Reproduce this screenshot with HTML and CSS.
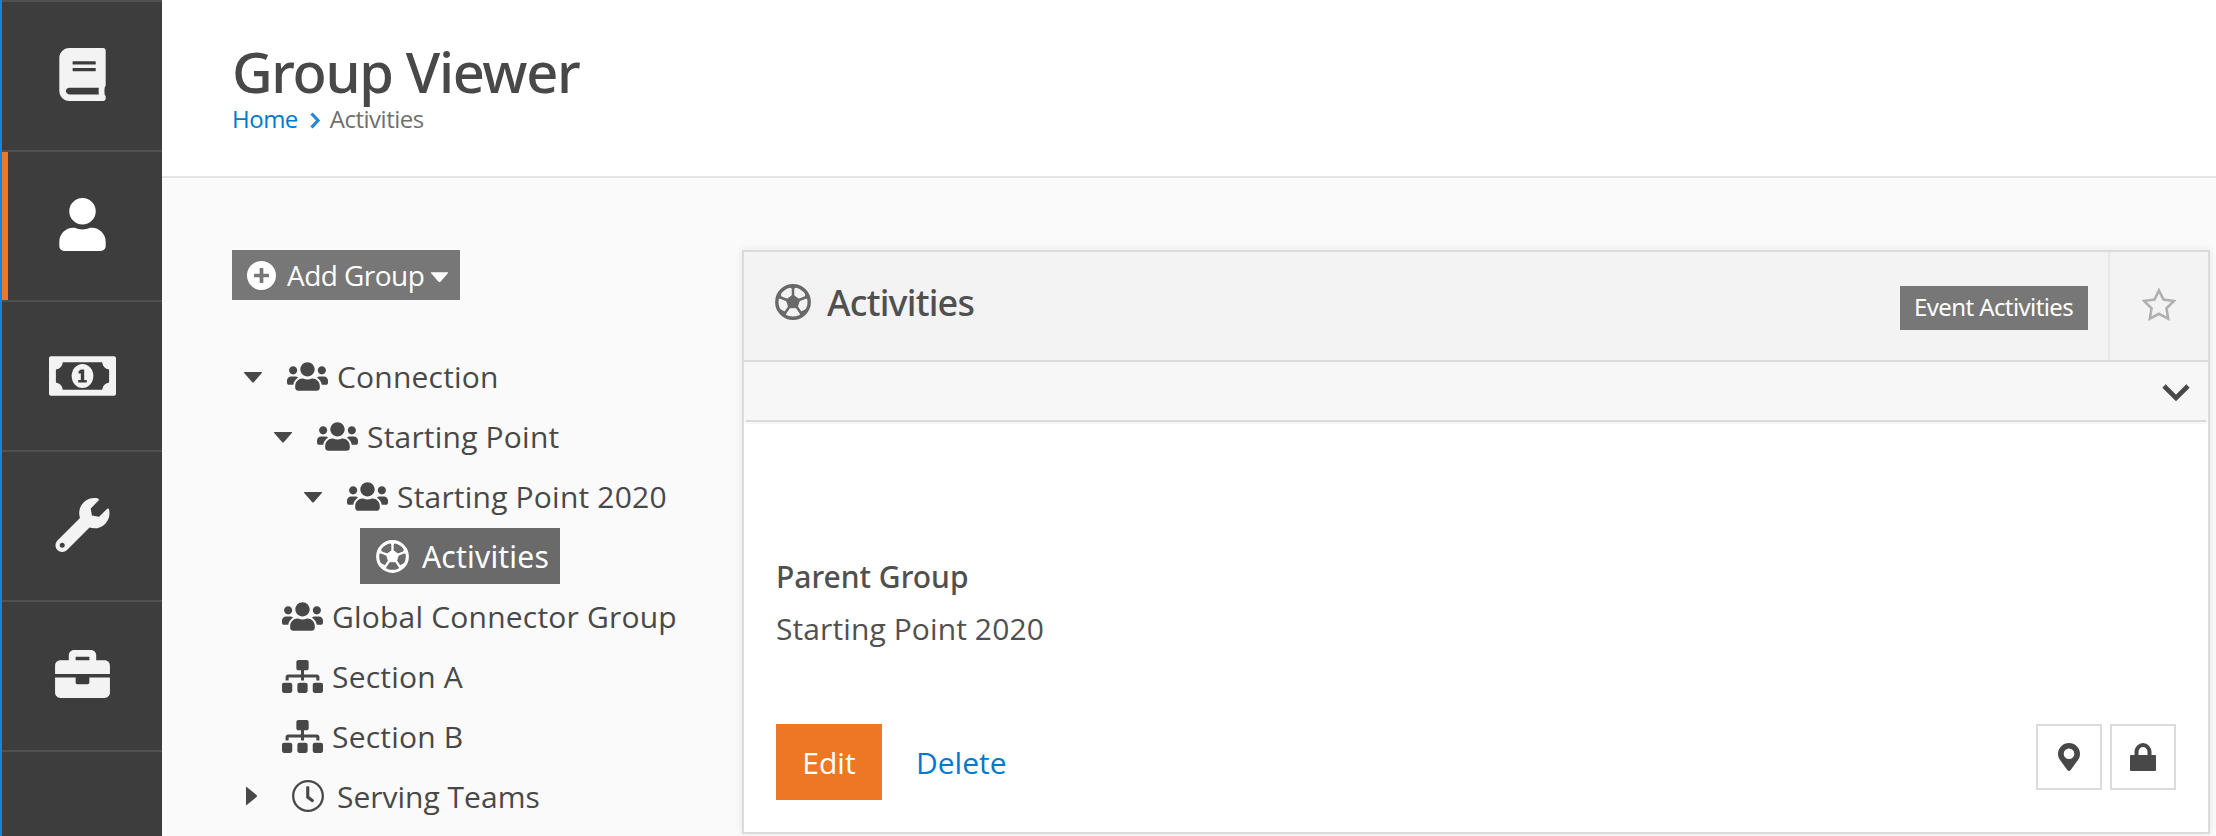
FILE: index.html
```html
<!DOCTYPE html>
<html lang="en">
<head>
<meta charset="utf-8">
<title>Group Viewer</title>
<link rel="stylesheet" href="styles.css">
</head>
<body>
<svg class="defs" width="0" height="0">
  <symbol id="users" viewBox="0 0 640 512"><path d="M96 224c35.3 0 64-28.7 64-64s-28.7-64-64-64-64 28.7-64 64 28.7 64 64 64zm448 0c35.3 0 64-28.7 64-64s-28.7-64-64-64-64 28.7-64 64 28.7 64 64 64zm32 32h-64c-17.6 0-33.5 7.1-45.1 18.6 40.3 22.1 68.9 62 75.1 109.4h66c17.7 0 32-14.3 32-32v-32c0-35.3-28.7-64-64-64zm-256 0c61.9 0 112-50.1 112-112S381.9 32 320 32 208 82.1 208 144s50.1 112 112 112zm76.8 32h-8.3c-20.8 10-43.9 16-68.5 16s-47.6-6-68.5-16h-8.3C179.6 288 128 339.6 128 403.2V432c0 26.5 21.5 48 48 48h288c26.5 0 48-21.5 48-48v-28.8c0-63.6-51.6-115.2-115.2-115.2zm-223.7-13.4C161.5 263.1 145.6 256 128 256H64c-35.3 0-64 28.7-64 64v32c0 17.7 14.3 32 32 32h65.9c6.3-47.4 34.9-87.3 75.2-109.4z"/></symbol>
  <symbol id="sitemap" viewBox="0 0 640 512"><path d="M128 352H32c-17.67 0-32 14.33-32 32v96c0 17.67 14.33 32 32 32h96c17.67 0 32-14.33 32-32v-96c0-17.67-14.33-32-32-32zm-24-80h192v48h48v-48h192v48h48v-57.59c0-21.17-17.23-38.41-38.41-38.41H344v-64h40c17.67 0 32-14.33 32-32V32c0-17.67-14.33-32-32-32H256c-17.67 0-32 14.33-32 32v96c0 17.67 14.33 32 32 32h40v64H94.41C73.23 224 56 241.23 56 262.41V320h48v-48zm264 80h-96c-17.67 0-32 14.33-32 32v96c0 17.67 14.33 32 32 32h96c17.67 0 32-14.33 32-32v-96c0-17.67-14.33-32-32-32zm240 0h-96c-17.67 0-32 14.33-32 32v96c0 17.67 14.33 32 32 32h96c17.67 0 32-14.33 32-32v-96c0-17.67-14.33-32-32-32z"/></symbol>
  <symbol id="caret-down" viewBox="0 0 20 11"><path d="M1.5 0h17q1.2 0 .3 1L11 10q-1 1-2 0L1.200 1q-.9-1 .3-1z"/></symbol>
  <symbol id="caret-right" viewBox="0 0 11 20"><path d="M0 1.500v17q0 1.200 1 .3L10.500 11q1-1 0-2L1 1.200q-1-.9-1 .3z"/></symbol>
  <symbol id="ball" viewBox="0 0 36 36">
    <circle cx="18" cy="18" r="16.200" fill="none" stroke="currentColor" stroke-width="3.400"/>
    <path d="M18 11l6.700 4.800-2.600 7.900h-8.200l-2.600-7.900z" stroke="currentColor" stroke-width="1" stroke-linejoin="round"/>
    <path d="M18 12V3M24 16l9-3.500M21.500 22.500l5 7.500M14.500 22.500l-5 7.500M12 16l-9-3.500" fill="none" stroke="currentColor" stroke-width="2.500"/>
    <path d="M13.500 1.500h9L18 6zM31 7.500l3.500 8.500-5-2.500zM33 24l-8.500 8.500 1.200-4.800zM3 24l8.500 8.500-1.200-4.800zM5 7.500L1.500 16l5-2.500z"/>
  </symbol>
</svg>
<div class="app">
  <nav class="sidebar">
    <a class="nav-item"><svg class="nav-glyph nav-book" viewBox="0 0 448 512"><path d="M448 360V24c0-13.300-10.700-24-24-24H96C43 0 0 43 0 96v320c0 53 43 96 96 96h328c13.300 0 24-10.700 24-24v-16c0-7.500-3.500-14.300-8.900-18.700-4.200-15.400-4.200-59.300 0-74.700 5.400-4.300 8.900-11.100 8.900-18.600zM128 134c0-3.300 2.700-6 6-6h212c3.300 0 6 2.700 6 6v20c0 3.300-2.700 6-6 6H134c-3.300 0-6-2.700-6-6v-20zm0 64c0-3.300 2.700-6 6-6h212c3.300 0 6 2.700 6 6v20c0 3.300-2.700 6-6 6H134c-3.300 0-6-2.700-6-6v-20zm253.400 250H96c-17.700 0-32-14.300-32-32 0-17.600 14.400-32 32-32h285.400c-1.900 17.100-1.900 46.900 0 64z"/></svg></a>
    <a class="nav-item active"><svg class="nav-glyph nav-user" viewBox="0 0 448 512"><path d="M224 256c70.700 0 128-57.300 128-128S294.700 0 224 0 96 57.300 96 128s57.300 128 128 128zm89.600 32h-16.700c-22.200 10.200-46.900 16-72.900 16s-50.600-5.800-72.900-16h-16.700C60.200 288 0 348.200 0 422.400V464c0 26.500 21.500 48 48 48h352c26.500 0 48-21.500 48-48v-41.600c0-74.200-60.200-134.400-134.400-134.400z"/></svg></a>
    <a class="nav-item"><svg class="nav-glyph nav-money" viewBox="0 0 68 40"><path fill-rule="evenodd" d="M2 0h64q2 0 2 2v36q0 2-2 2H2q-2 0-2-2V2q0-2 2-2zM14 6q-.5 6-7 7.500v13q6.500 1.500 7 7.500h40q.5-6 7-7.500v-13q-6.500-1.500-7-7.500z"/><ellipse cx="34" cy="20" rx="11" ry="12.200"/><path class="nav-cut" d="M32.300 13.500h3.400v10.600h2.600v2.400h-8.600v-2.400h2.600v-7l-2.300.7v-2.500z"/></svg></a>
    <a class="nav-item"><svg class="nav-glyph nav-wrench" viewBox="0 0 512 512"><path d="M507.730 109.100c-2.240-9.030-13.540-12.090-20.120-5.510l-74.360 74.360-67.880-11.310-11.310-67.880 74.360-74.360c6.620-6.620 3.430-17.900-5.660-20.160-47.380-11.740-99.550.91-136.580 37.930-39.640 39.640-50.550 97.100-34.050 147.200L18.740 402.760c-24.990 24.990-24.990 65.510 0 90.500 24.990 24.990 65.510 24.990 90.500 0l213.210-213.210c50.120 16.710 107.470 5.680 147.370-34.220 37.070-37.070 49.700-89.320 37.910-136.730zM64 472c-13.250 0-24-10.750-24-24 0-13.260 10.750-24 24-24s24 10.740 24 24c0 13.250-10.750 24-24 24z"/></svg></a>
    <a class="nav-item"><svg class="nav-glyph nav-case" viewBox="0 32 512 448"><path d="M320 336c0 8.840-7.160 16-16 16h-96c-8.840 0-16-7.160-16-16v-48H0v144c0 25.600 22.400 48 48 48h416c25.600 0 48-22.400 48-48V288H320v48zm144-208h-80V80c0-25.600-22.400-48-48-48H176c-25.600 0-48 22.400-48 48v48H48c-25.600 0-48 22.400-48 48v80h512v-80c0-25.600-22.400-48-48-48zm-144 0H192V96h128v32z"/></svg></a>
    <div class="nav-rest"></div>
  </nav>
  <div class="page">
    <header class="page-header">
      <h1 class="page-title">Group Viewer</h1>
      <div class="breadcrumb"><a class="crumb-link">Home</a><svg class="crumb-sep" viewBox="0 0 10 17"><path d="M1.500 1.500L8 8.500l-6.500 7"/></svg><span>Activities</span></div>
    </header>
    <main class="content">
      <aside class="tree-pane">
        <button class="add-group"><svg class="add-icon" viewBox="8 8 496 496"><path d="M256 8C119 8 8 119 8 256s111 248 248 248 248-111 248-248S393 8 256 8zm128 268c0 6.600-5.400 12-12 12h-84v84c0 6.600-5.400 12-12 12h-40c-6.600 0-12-5.400-12-12v-84h-84c-6.600 0-12-5.400-12-12v-40c0-6.600 5.400-12 12-12h84v-84c0-6.600 5.400-12 12-12h40c6.600 0 12 5.400 12 12v84h84c6.600 0 12 5.400 12 12v40z"/></svg><span class="add-label">Add Group</span><svg class="add-caret"><use href="#caret-down"/></svg></button>
        <ul class="tree">
          <li class="row level-1"><svg class="caret"><use href="#caret-down"/></svg><svg class="icon-wide"><use href="#users"/></svg><span>Connection</span></li>
          <li class="row level-2"><svg class="caret"><use href="#caret-down"/></svg><svg class="icon-wide"><use href="#users"/></svg><span>Starting Point</span></li>
          <li class="row level-3"><svg class="caret"><use href="#caret-down"/></svg><svg class="icon-wide"><use href="#users"/></svg><span>Starting Point 2020</span></li>
          <li class="row level-4"><a class="selected"><svg class="icon-ball"><use href="#ball"/></svg><span>Activities</span></a></li>
          <li class="row leaf"><svg class="icon-wide"><use href="#users"/></svg><span>Global Connector Group</span></li>
          <li class="row leaf"><svg class="icon-wide"><use href="#sitemap"/></svg><span>Section A</span></li>
          <li class="row leaf"><svg class="icon-wide"><use href="#sitemap"/></svg><span>Section B</span></li>
          <li class="row level-1"><svg class="caret-closed"><use href="#caret-right"/></svg><svg class="icon-clock" viewBox="8 8 496 496"><path d="M256 8C119 8 8 119 8 256s111 248 248 248 248-111 248-248S393 8 256 8zm0 460c-117 0-212-95-212-212S139 44 256 44s212 95 212 212-95 212-212 212zm61.800-116.400l-84.900-61.700c-3.100-2.300-4.900-5.900-4.900-9.700V116c0-6.600 5.400-12 12-12h24c6.600 0 12 5.400 12 12v145.700l70 50.600c5.400 3.900 6.500 11.400 2.600 16.800L334.600 349c-3.900 5.300-11.400 6.500-16.800 2.600z"/></svg><span class="serving">Serving Teams</span></li>
        </ul>
      </aside>
      <section class="panel">
        <div class="panel-head">
          <svg class="panel-icon"><use href="#ball"/></svg>
          <h2 class="panel-title">Activities</h2>
          <span class="tag">Event Activities</span>
          <a class="follow"><svg class="star" viewBox="0 0 34 33"><path d="M17 2.500l4.500 9 10.500 1.500-7.500 7.300 1.700 10.400L17 25.800l-9.200 4.900 1.700-10.400L2 13l10.500-1.500z"/></svg></a>
        </div>
        <div class="panel-drawer"><svg class="chevron" viewBox="0 0 28 17"><path d="M2 2l12 12L26 2"/></svg></div>
        <div class="panel-body">
          <dl class="field"><dt>Parent Group</dt><dd>Starting Point 2020</dd></dl>
          <div class="actions">
            <button class="btn-edit">Edit</button>
            <a class="btn-delete">Delete</a>
            <div class="tools">
              <a class="tool"><svg class="pin" viewBox="0 0 22 28"><path fill-rule="evenodd" d="M11 0a11 11 0 0 1 11 11q0 2.500-1 4.500l-8.300 11.500q-1.700 2-3.400 0L1 15.500Q0 13.500 0 11A11 11 0 0 1 11 0zm0 5.500a5.300 5.300 0 1 0 0 10.600 5.300 5.300 0 0 0 0-10.600z"/></svg></a>
              <a class="tool"><svg class="lock" viewBox="0 0 26 28"><path fill-rule="evenodd" d="M4.500 12V9a8.500 9 0 0 1 17 0v3H25q1 0 1 1v14q0 1-1 1H1q-1 0-1-1V13q0-1 1-1zM8.500 12h9V9a4.500 5 0 0 0-9 0z"/></svg></a>
            </div>
          </div>
        </div>
      </section>
    </main>
  </div>
</div>
</body>
</html>
```

FILE: styles.css
```css
* { box-sizing: border-box; }
body {
  margin: 0;
  height: 836px;
  overflow: hidden;
  font-family: "Open Sans", "Noto Sans", sans-serif;
  font-size: 30px;
  font-weight: 400;
  color: #505050;
  background: #fafafa;
}
h1, h2, ul, dl, dd { margin: 0; padding: 0; }
h1, h2, dt { font-family: "Noto Sans", sans-serif; }
svg { display: block; flex: none; fill: currentColor; }
button { border: 0; font: inherit; }
.defs { display: none; }

.app { display: flex; height: 836px; }

/* Sidebar */
.sidebar {
  flex: none;
  width: 162px;
  border-left: 2px solid #1583dd;
  background: #3d3d3d;
  color: #f3f3f3;
}
.nav-item {
  display: flex;
  justify-content: center;
  height: 150px;
  border-top: 2px solid #505050;
  padding: 46px 0 0 1px;
}
.nav-item.active {
  color: #fff;
  background: linear-gradient(#ee7725, #ee7725) left / 6px 100% no-repeat;
}
.nav-rest { border-top: 2px solid #505050; }
.nav-book, .nav-user { width: 47px; height: 53px; }
.nav-money { width: 67px; height: 40px; margin-top: 8px; }
.nav-cut { fill: #3d3d3d; }
.nav-wrench { width: 55px; height: 54px; }
.nav-case { width: 55px; height: 48px; margin-top: 2px; }

/* Header */
.page { flex: 1; display: flex; flex-direction: column; min-width: 0; }
.page-header {
  height: 178px;
  padding: 43px 0 0 70px;
  border-bottom: 2px solid #e5e5e5;
  background: #fff;
}
.page-title {
  color: #484848;
  font-size: 56px;
  line-height: 56px;
  font-weight: 500;
  letter-spacing: -1.35px;
}
.breadcrumb {
  display: flex;
  align-items: center;
  margin-top: 8px;
  font-size: 24px;
  line-height: 24px;
  letter-spacing: -.5px;
  color: #6f6f6f;
}
.crumb-link { color: #0079cc; }
.crumb-sep {
  width: 10px;
  height: 17px;
  margin: 3px 10px 0 12px;
  fill: none;
  stroke: #2b86d0;
  stroke-width: 3.2;
}

.content { flex: 1; display: flex; padding: 72px 6px 0 70px; }

/* Group tree */
.tree-pane { flex: none; width: 510px; color: #484848; }
.add-group {
  display: flex;
  align-items: center;
  width: 228px;
  height: 50px;
  padding: 0 0 0 15px;
  background: #777;
  color: #fff;
  font-size: 28px;
  line-height: 50px;
}
.add-icon { width: 29px; height: 29px; margin-right: 11px; }
.add-label { width: 136px; letter-spacing: -.55px; white-space: nowrap; }
.add-caret { width: 19px; height: 11px; margin: 4px 0 0 7px; }
.tree { margin-top: 46px; list-style: none; }
.row {
  display: flex;
  align-items: center;
  height: 60px;
  line-height: 56px;
  white-space: nowrap;
  letter-spacing: .2px;
}
.row span { padding-top: 2px; }
.row .serving { letter-spacing: 0; }
.level-1 { padding-left: 11px; }
.level-2 { padding-left: 41px; }
.level-3 { padding-left: 71px; }
.level-4 { padding-left: 128px; }
.leaf { padding-left: 50px; }
.caret { width: 20px; height: 11px; margin: 2px 24px 0 0; }
.caret-closed { width: 11px; height: 20px; margin: 0 35px 0 3px; }
.icon-wide { width: 41px; height: 33px; margin-right: 9px; }
.icon-clock { width: 32px; height: 32px; margin-right: 13px; }
.selected {
  display: flex;
  align-items: center;
  width: 200px;
  height: 56px;
  padding-left: 16px;
  background: #6a6a6a;
  color: #fff;
  font-family: "Noto Sans", sans-serif;
  font-weight: 400;
}
.icon-ball { width: 33px; height: 33px; margin: 0 13px 0 0; }

/* Detail panel */
.panel {
  flex: 1;
  height: 584px;
  border: 2px solid #dbdbdb;
  background: #fff;
  box-shadow: 0 0 8px rgba(0, 0, 0, .09);
}
.panel-head {
  display: flex;
  height: 110px;
  padding-left: 31px;
  border-bottom: 2px solid #dbdbdb;
  background: #f3f3f3;
}
.panel-icon { width: 36px; height: 36px; margin: 32px 16px 0 0; color: #696969; }
.panel-title {
  margin-top: 33px;
  font-size: 36px;
  line-height: 36px;
  font-weight: 500;
  letter-spacing: -.8px;
}
.tag {
  width: 188px;
  height: 44px;
  margin: 34px 20px 0 auto;
  padding-left: 14px;
  background: #777;
  color: #fff;
  font-family: "Noto Sans", sans-serif;
  font-size: 24px;
  line-height: 41px;
  letter-spacing: -.6px;
  white-space: nowrap;
}
.follow {
  display: flex;
  width: 100px;
  padding: 36px 0 0 32px;
  border-left: 2px solid #e8e8e8;
}
.star { width: 34px; height: 33px; fill: none; stroke: #b0b0b0; stroke-width: 2.6; }
.panel-drawer {
  display: flex;
  justify-content: flex-end;
  height: 62px;
  padding: 22px 18px 0 0;
  background: linear-gradient(#dbdbdb, #dbdbdb) 2px 58px / calc(100% - 4px) 2px no-repeat #f7f7f7;
}
.chevron { width: 28px; height: 17px; fill: none; stroke: #484848; stroke-width: 4.6; }
.panel-body { padding: 127px 32px 0; }
.field dt { line-height: 52px; font-weight: 500; letter-spacing: 0; }
.field dd { line-height: 52px; letter-spacing: .1px; }
.actions { display: flex; margin-top: 69px; line-height: 78px; }
.btn-edit {
  width: 106px;
  height: 76px;
  padding: 0;
  background: #ee7725;
  color: #fff;
  line-height: 78px;
}
.btn-delete { margin-left: 34px; color: #0079cc; }
.tools { display: flex; gap: 8px; margin-left: auto; color: #484848; }
.tool {
  display: flex;
  justify-content: center;
  width: 66px;
  height: 66px;
  padding-top: 17px;
  border: 2px solid #dbdbdb;
}
.pin { width: 22px; height: 28px; }
.lock { width: 26px; height: 28px; }
```
